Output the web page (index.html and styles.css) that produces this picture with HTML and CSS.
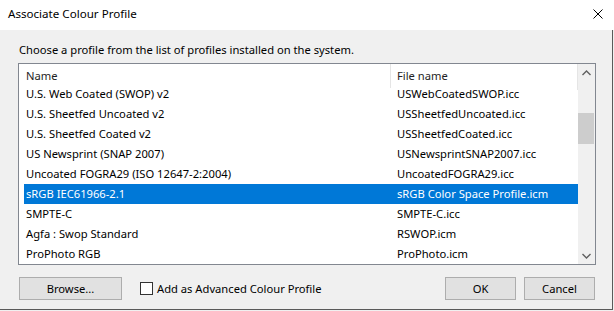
FILE: index.html
```html
<!DOCTYPE html>
<html>

<head>
  <meta charset="utf-8">
  <title>Associate Colour Profile</title>
  <link rel="stylesheet" href="styles.css">
</head>

<body>
  <div class="dialog">
    <div class="titlebar">
      <span class="title">Associate Colour Profile</span>
      <svg class="close" width="10" height="10" viewBox="0 0 10 10">
        <path d="M0.5 0.5 L9.5 9.5 M9.5 0.5 L0.5 9.5" stroke="#000" stroke-width="1" fill="none" />
      </svg>
    </div>

    <div class="content">
      <p class="prompt">Choose a profile from the list of profiles installed on the system.</p>

      <div class="listbox">
        <div class="list">
          <div class="row header">
            <span class="col-name">Name</span>
            <span class="col-file">File name</span>
          </div>
          <div class="row"><span class="col-name">U.S. Web Coated (SWOP) v2</span><span class="col-file">USWebCoatedSWOP.icc</span></div>
          <div class="row"><span class="col-name">U.S. Sheetfed Uncoated v2</span><span class="col-file">USSheetfedUncoated.icc</span></div>
          <div class="row"><span class="col-name">U.S. Sheetfed Coated v2</span><span class="col-file">USSheetfedCoated.icc</span></div>
          <div class="row"><span class="col-name">US Newsprint (SNAP 2007)</span><span class="col-file">USNewsprintSNAP2007.icc</span></div>
          <div class="row"><span class="col-name">Uncoated FOGRA29 (ISO 12647-2:2004)</span><span class="col-file">UncoatedFOGRA29.icc</span></div>
          <div class="row selected"><span class="col-name">sRGB IEC61966-2.1</span><span class="col-file">sRGB Color Space Profile.icm</span></div>
          <div class="row"><span class="col-name">SMPTE-C</span><span class="col-file">SMPTE-C.icc</span></div>
          <div class="row"><span class="col-name">Agfa : Swop Standard</span><span class="col-file">RSWOP.icm</span></div>
          <div class="row"><span class="col-name">ProPhoto RGB</span><span class="col-file">ProPhoto.icm</span></div>
        </div>

        <div class="scrollbar">
          <svg class="arrow" width="17" height="17" viewBox="0 0 17 17">
            <path d="M4.5 11 L8.5 7 L12.5 11" stroke="#606060" stroke-width="1.4" fill="none" />
          </svg>
          <div class="track">
            <div class="thumb"></div>
          </div>
          <svg class="arrow" width="17" height="17" viewBox="0 0 17 17">
            <path d="M4.5 7 L8.5 11 L12.5 7" stroke="#606060" stroke-width="1.4" fill="none" />
          </svg>
        </div>
      </div>

      <div class="actions">
        <button class="btn browse">Browse...</button>
        <label class="check"><span class="box"></span>Add as Advanced Colour Profile</label>
        <span class="spacer"></span>
        <button class="btn">OK</button>
        <button class="btn">Cancel</button>
      </div>
    </div>
  </div>
</body>

</html>
```

FILE: styles.css
```css
body {
  margin: 0;
  background: #f0f0f0;
  font-family: "Noto Sans", "Liberation Sans", sans-serif;
  font-size: 11.2px;
  color: #000;
}

.dialog {
  width: 614px;
  height: 311px;
  overflow: hidden;
}

.titlebar {
  height: 30px;
  background: #fff;
  display: flex;
  align-items: center;
  padding: 0 11px 0 8px;
  font-size: 11.6px;
}

.title {
  flex-grow: 1;
  margin-top: -4px;
}

.close {
  margin-top: -2px;
}

.content {
  box-sizing: border-box;
  width: 613px;
  height: 280px;
  border-right: 1px solid #5a5a5a;
  border-bottom: 1px solid #5a5a5a;
  padding: 0 0 0 18px;
}

.prompt {
  margin: 0;
  padding: 12px 0 0 1px;
  height: 21px;
  line-height: 16px;
}

.listbox {
  width: 578px;
  height: 202px;
  box-sizing: border-box;
  border: 1px solid #828790;
  background: #fff;
  display: flex;
}

.list {
  flex-grow: 1;
  padding-left: 5px;
}

.row {
  display: flex;
  height: 20px;
  line-height: 20px;
  white-space: nowrap;
}

.col-name {
  flex-shrink: 0;
  width: 367px;
  padding-left: 2px;
  box-sizing: border-box;
}

.col-file {
  flex-grow: 1;
  padding-left: 6px;
}

.header {
  color: #1e1e1e;
  line-height: 24px;
}

.header .col-name {
  border-right: 1px solid #e5e5e5;
  height: 24px;
}

.header .col-file {
  height: 26px;
  border-right: 1px solid #e5e5e5;
}

.selected {
  background: #0078d7;
  color: #fff;
}

.scrollbar {
  width: 17px;
  background: #f0f0f0;
  display: flex;
  flex-direction: column;
}

.track {
  flex-grow: 1;
  padding-top: 32px;
}

.thumb {
  height: 31px;
  margin-right: 1px;
  background: #cdcdcd;
}

.actions {
  display: flex;
  align-items: center;
  width: 576px;
  padding-top: 12px;
  padding-left: 1px;
}

.btn {
  font: inherit;
  height: 23px;
  min-width: 71px;
  background: #e1e1e1;
  border: 1px solid #adadad;
  padding: 0 10px;
  color: #000;
  margin-left: 8px;
}

.browse {
  width: 103px;
  margin-left: 0;
}

.check {
  display: flex;
  align-items: center;
  margin-left: 18px;
}

.box {
  width: 13px;
  height: 13px;
  box-sizing: border-box;
  border: 1px solid #333;
  background: #fff;
  margin-right: 4px;
}

.spacer {
  flex-grow: 1;
}
```
